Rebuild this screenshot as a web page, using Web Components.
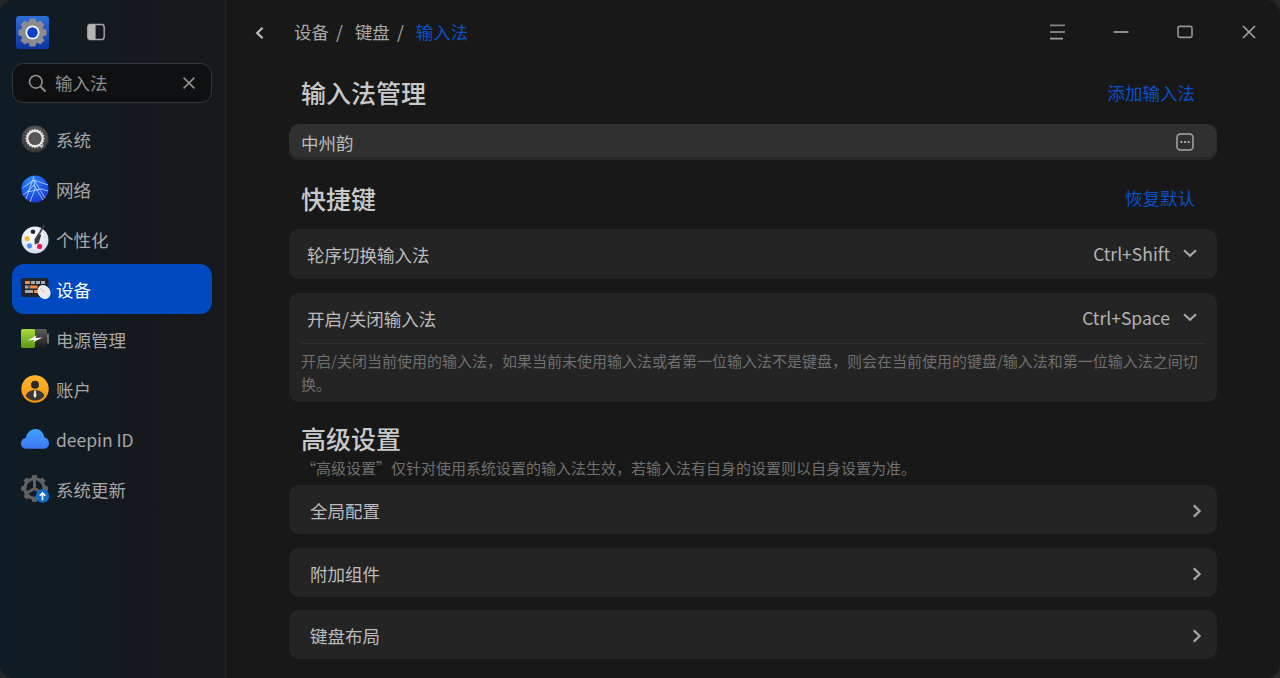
<!DOCTYPE html>
<html lang="zh-CN"><head><meta charset="utf-8"><title>设置</title>
<style>
html,body{margin:0;padding:0;height:678px;overflow:hidden;background:#262626}
body{font-family:"Noto Sans CJK SC","Noto Sans",sans-serif}
</style></head><body>
<settings-window>
  <side-bar slot="side">
    <nav-item icon="system">系统</nav-item>
    <nav-item icon="network">网络</nav-item>
    <nav-item icon="theme">个性化</nav-item>
    <nav-item icon="device" active>设备</nav-item>
    <nav-item icon="power">电源管理</nav-item>
    <nav-item icon="account">账户</nav-item>
    <nav-item icon="cloud">deepin ID</nav-item>
    <nav-item icon="update">系统更新</nav-item>
  </side-bar>
  <title-bar slot="top"></title-bar>
  <section-head action="添加输入法" top="0">输入法管理</section-head>
  <setting-row kind="plain" hi>中州韵<ui-glyph slot="end" name="more"></ui-glyph></setting-row>
  <section-head action="恢复默认" top="10">快捷键</section-head>
  <setting-row kind="key" value="Ctrl+Shift">轮序切换输入法</setting-row>
  <setting-row kind="key" value="Ctrl+Space" style="margin-top:14px">开启/关闭输入法
    <span slot="desc">开启/关闭当前使用的输入法，如果当前未使用输入法或者第一位输入法不是键盘，则会在当前使用的键盘/输入法和第一位输入法之间切换。</span>
  </setting-row>
  <section-head top="13" sub="“高级设置”仅针对使用系统设置的输入法生效，若输入法有自身的设置则以自身设置为准。">高级设置</section-head>
  <setting-row kind="link">全局配置</setting-row>
  <setting-row kind="link" style="margin-top:14px">附加组件</setting-row>
  <setting-row kind="link" style="margin-top:13px">键盘布局</setting-row>
</settings-window>
<script>
const GLYPHS={
 more:'<svg width="20" height="20" viewBox="0 0 20 20"><rect x="2" y="2" width="16" height="16" rx="3.5" fill="none" stroke="#a8a8a8" stroke-width="1.500"/><circle cx="6.400" cy="10" r="1.100" fill="#c4c4c4"/><circle cx="10" cy="10" r="1.100" fill="#c4c4c4"/><circle cx="13.600" cy="10" r="1.100" fill="#c4c4c4"/></svg>',
 down:'<svg width="16" height="16" viewBox="0 0 16 16"><path d="M2 4.200 8 9.800 14 4.200" fill="none" stroke="#a6a6a6" stroke-width="2.200"/></svg>',
 right:'<svg width="16" height="16" viewBox="0 0 16 16"><path d="M4.800 2.400 10.600 8 4.800 13.600" fill="none" stroke="#a6a6a6" stroke-width="2.200"/></svg>',
 back:'<svg width="16" height="16" viewBox="0 0 16 16"><path d="M10.600 2.800 5.200 8 10.600 13.200" fill="none" stroke="#bdbdbd" stroke-width="2.200"/></svg>',
 menu:'<svg width="18" height="18" viewBox="0 0 18 18"><path d="M2 2.400h15" stroke="#858585" stroke-width="1.600" fill="none"/><path d="M2 9h15M2 15.600h13" stroke="#a0a0a0" stroke-width="1.600" fill="none"/></svg>',
 min:'<svg width="18" height="18" viewBox="0 0 18 18"><path d="M1.500 9h15" stroke="#8c8c8c" stroke-width="1.800" fill="none"/></svg>',
 max:'<svg width="18" height="18" viewBox="0 0 18 18"><rect x="2" y="3.400" width="14" height="11" rx="1.600" fill="none" stroke="#969696" stroke-width="1.600"/></svg>',
 close:'<svg width="18" height="18" viewBox="0 0 18 18"><path d="M3 3l12 12M15 3 3 15" stroke="#a0a0a0" stroke-width="1.700" fill="none"/></svg>',
 panel:'<svg width="20" height="20" viewBox="0 0 20 20"><rect x="1.800" y="2.600" width="16.400" height="14.800" rx="2.600" fill="none" stroke="#a3a3a3" stroke-width="1.500"/><path d="M4.400 2.600H9.600V17.400H4.400A2.600 2.600 0 0 1 1.800 14.800V5.200A2.600 2.600 0 0 1 4.400 2.600Z" fill="#b5b5b5"/></svg>',
 search:'<svg width="20" height="20" viewBox="0 0 20 20"><circle cx="8.800" cy="8.800" r="6.300" fill="none" stroke="#8e8e8e" stroke-width="1.700"/><path d="m13.500 13.500 5 5" stroke="#8e8e8e" stroke-width="1.900" fill="none"/></svg>',
 x:'<svg width="14" height="14" viewBox="0 0 14 14"><path d="M1.600 1.600l10.800 10.800M12.400 1.600 1.600 12.400" stroke="#8f8f8f" stroke-width="1.700" fill="none"/></svg>',
 logo:'<svg width="33" height="33" viewBox="0 0 33 33"><defs><linearGradient id="lg" x1="0" y1="0" x2="0" y2="1"><stop offset="0" stop-color="#2f6fd8"/><stop offset="1" stop-color="#0a34a0"/></linearGradient></defs><rect width="33" height="33" rx="3" fill="url(#lg)"/><g fill="#8c8c90"><circle cx="16.500" cy="16.500" r="11.500"/><rect x="13.200" y="2.500" width="6.600" height="6" rx="1.200"/><rect x="13.200" y="24.500" width="6.600" height="6" rx="1.200"/><rect x="2.500" y="13.200" width="6" height="6.600" rx="1.200"/><rect x="24.500" y="13.200" width="6" height="6.600" rx="1.200"/><g transform="rotate(45 16.500 16.500)"><rect x="13.200" y="2.500" width="6.600" height="6" rx="1.200"/><rect x="13.200" y="24.500" width="6.600" height="6" rx="1.200"/><rect x="2.500" y="13.200" width="6" height="6.600" rx="1.200"/><rect x="24.500" y="13.200" width="6" height="6.600" rx="1.200"/></g></g><circle cx="16.500" cy="16.500" r="7" fill="#f2f4f8"/><circle cx="16.500" cy="16.500" r="5.200" fill="#0a3fc8"/></svg>'
};
const gearTeeth=(cx,cy,n,ro,ri)=>{let d='';for(let i=0;i<n*2;i++){const r=i%2?ri:ro,a=i*Math.PI/n;d+=(i?'L':'M')+(cx+r*Math.cos(a)).toFixed(2)+' '+(cy+r*Math.sin(a)).toFixed(2)}return d+'Z'};
const cog=(cx,cy,n,ro,w,h,fill)=>{let s='';for(let i=0;i<n;i++)s+=`<rect x="${cx-w/2}" y="${cy-ro}" width="${w}" height="${h}" rx="1" fill="${fill}" transform="rotate(${i*360/n} ${cx} ${cy})"/>`;return s};
const NAV={
 system:`<svg width="28" height="28" viewBox="0 0 28 28"><defs><radialGradient id="s" cx=".5" cy=".35" r=".8"><stop offset="0" stop-color="#6a6a6a"/><stop offset="1" stop-color="#2b2b2b"/></radialGradient></defs><circle cx="14" cy="14" r="13.500" fill="url(#s)"/><path d="${gearTeeth(14,13.500,20,9.900,8.300)}" fill="#e8e8e8"/><circle cx="14" cy="13.500" r="6.600" fill="#565656"/><path d="M18.500 21.500l3-2.500 1.200 1-1.700 3.200z" fill="#c4c4c4"/></svg>`,
 network:`<svg width="28" height="28" viewBox="0 0 28 28"><defs><radialGradient id="n" cx=".35" cy=".2" r=".95"><stop offset="0" stop-color="#2d86f2"/><stop offset=".55" stop-color="#1a55ea"/><stop offset="1" stop-color="#2230c4"/></radialGradient></defs><circle cx="14" cy="14" r="13.600" fill="url(#n)"/><g stroke="#d2e5ff" stroke-width=".75" fill="none" opacity=".95"><path d="M13 1 5 24M13 5 24 23M1.500 13 13 5 27 10M13 10 22 25M13 10 6 17 2 20M6 17 20 14 27 16M13 5 14 14 9 27"/></g></svg>`,
 theme:`<svg width="28" height="29" viewBox="0 0 28 29"><defs><radialGradient id="p" cx=".4" cy=".35" r=".8"><stop offset="0" stop-color="#fff"/><stop offset="1" stop-color="#cdd5ea"/></radialGradient></defs><circle cx="14" cy="15" r="13.500" fill="url(#p)"/><circle cx="12" cy="6.800" r="2.300" fill="#26262a"/><circle cx="6.200" cy="13.600" r="2.700" fill="#f6b93b"/><circle cx="8.500" cy="20.800" r="2.600" fill="#4f8ff0"/><circle cx="18.600" cy="21.400" r="2.600" fill="#e61d4d"/><path d="M23.400 0 18.300 8.500" stroke="#3c3c40" stroke-width="1.700"/><path d="M17.400 8 20.200 10 17.800 18 13.800 19.400 13.500 14.500Z" fill="#3a3a3e"/></svg>`,
 device:`<svg width="30" height="22" viewBox="0 0 30 22"><rect x="0" y="0" width="27.500" height="19" rx="2.500" fill="#20242e"/><g fill="#a8a8a8"><rect x="4" y="3" width="5" height="3" fill="#f08a45"/><rect x="10" y="3" width="4" height="3"/><rect x="15" y="3" width="4" height="3"/><rect x="20" y="3" width="4" height="3"/><rect x="4" y="7.500" width="3.500" height="3"/><rect x="8.500" y="7.500" width="8" height="3" fill="#f08a45"/><rect x="4" y="12" width="8" height="3"/><rect x="13" y="12" width="4" height="3" fill="#f08a45"/></g><ellipse cx="23" cy="14" rx="6.200" ry="7.400" transform="rotate(-35 23 14)" fill="#ececec"/><path d="M19.500 10.200l3.500 3.800" stroke="#b0b0b0" stroke-width=".9"/></svg>`,
 power:`<svg width="28" height="20" viewBox="0 0 28 20"><defs><linearGradient id="g" x1="0" x2="0" y1="0" y2="1"><stop offset="0" stop-color="#a9dc3c"/><stop offset="1" stop-color="#5b9814"/></linearGradient><linearGradient id="k" x1="0" x2="0" y1="0" y2="1"><stop offset="0" stop-color="#5e5e5e"/><stop offset="1" stop-color="#1a1a1a"/></linearGradient></defs><rect x="0" y="0" width="26" height="19" rx="1.800" fill="url(#k)"/><rect x="0" y="0" width="14" height="19" rx="1.800" fill="url(#g)"/><rect x="26" y="4.500" width="2" height="10" rx=".6" fill="#6e6e6e"/><path d="M6.500 11.500 15.500 6.500 14.500 9 21.500 8.500 12.500 13 13.500 10.800Z" fill="#fff"/></svg>`,
 account:`<svg width="28" height="28" viewBox="0 0 28 28"><defs><linearGradient id="a" x1="0" x2="0" y1="0" y2="1"><stop offset="0" stop-color="#ffb52e"/><stop offset="1" stop-color="#f59410"/></linearGradient><clipPath id="ac"><circle cx="14" cy="14" r="11.500"/></clipPath></defs><circle cx="14" cy="14" r="13.700" fill="url(#a)"/><circle cx="14" cy="9.800" r="4" fill="#2c2a28"/><g clip-path="url(#ac)"><path d="M3 28C3 18 9 15 14 15S25 18 25 28Z" fill="#3d3630"/></g><path d="M13.200 15.500h1.600l.7 5.500-1.500 2-1.500-2Z" fill="#e6e6e6"/></svg>`,
 cloud:`<svg width="28" height="20" viewBox="0 0 28 20"><defs><linearGradient id="c" x1="0" x2="0" y1="0" y2="1"><stop offset="0" stop-color="#3fa2ff"/><stop offset="1" stop-color="#3e76f4"/></linearGradient></defs><path d="M5.600 19.800C2.400 19.800 0 17.400 0 14.400C0 11.600 2 9.400 4.800 9C6 3.600 9.800 0 14.300 0C18.900 0 22.400 3.200 23.200 8C26 8.800 28 11.200 28 14.200C28 17.400 25.500 19.800 22.200 19.800Z" fill="url(#c)"/></svg>`,
 update:`<svg width="28" height="28" viewBox="0 0 28 28">${cog(13.500,13.500,8,13.400,5.200,5,'#616161')}<circle cx="13.500" cy="13.500" r="9.700" fill="none" stroke="#616161" stroke-width="3"/><path d="M13.500 13.500V5M13.500 13.500 5.700 18M13.500 13.500 21.300 18" stroke="#616161" stroke-width="3"/><circle cx="21.500" cy="21" r="6.700" fill="#0e6ccc"/><path d="M21.500 25.200V18.200M18.700 20.700l2.800-2.800 2.800 2.800" stroke="#fff" stroke-width="1.600" fill="none"/></svg>`
};
class Base extends HTMLElement{
  mount(html){const r=this.attachShadow({mode:'open'});r.innerHTML=html;return r}
}
class UiGlyph extends Base{connectedCallback(){if(this.shadowRoot)return;
  this.mount(`<style>:host{display:inline-flex;align-items:center;justify-content:center;line-height:0}</style>${GLYPHS[this.getAttribute('name')]}`)}}
class SettingsWindow extends Base{connectedCallback(){if(this.shadowRoot)return;
  this.mount(`<style>
  :host{display:flex;width:1280px;height:678px;overflow:hidden;border-radius:14px;background:#181818;color:#c8c8c8}
  .side{flex:0 0 226px;display:block}
  .main{flex:1;min-width:0;display:flex;flex-direction:column;padding:0 63px 0 63px;box-sizing:border-box}
  .top{display:block;margin:0 -63px}
  </style><div class="side"><slot name="side"></slot></div><div class="main"><div class="top"><slot name="top"></slot></div><slot></slot></div>`)}}
class SideBar extends Base{connectedCallback(){if(this.shadowRoot)return;
  this.mount(`<style>
  :host{display:flex;flex-direction:column;box-sizing:border-box;height:678px;padding:0 13px 0 12px;border-right:1px solid #222426;background:linear-gradient(90deg,#0f1c26 0%,#14191e 55%,#17191b 100%)}
  .head{height:63px;display:flex;align-items:flex-start;padding:16px 0 0 4px;box-sizing:border-box;gap:37px}
  .panel{margin-top:6px}
  .search{height:40px;box-sizing:border-box;margin-bottom:11px;border:1px solid #34373a;border-radius:11px;background:#0e1012;display:flex;align-items:center;padding:0 15px 0 14px;color:#8c8c8c;font-size:17.500px}
  .search span{flex:1;margin-left:8px;line-height:1}
  .list{display:flex;flex-direction:column}
  </style>
  <div class="head"><ui-glyph name="logo"></ui-glyph><ui-glyph class="panel" name="panel"></ui-glyph></div>
  <div class="search"><ui-glyph name="search"></ui-glyph><span>输入法</span><ui-glyph name="x"></ui-glyph></div>
  <div class="list"><slot></slot></div>`)}}
class NavItem extends Base{connectedCallback(){if(this.shadowRoot)return;
  const a=this.hasAttribute('active');
  this.mount(`<style>
  :host{display:flex;align-items:center;height:50px;box-sizing:border-box;padding-left:9px;border-radius:12px;font-size:17.500px;color:${a?'#fff':'#a7a7a7'};background:${a?'#0049c1':'transparent'}}
  .i{width:28px;height:30px;display:flex;align-items:center;justify-content:flex-start;margin-right:7px;line-height:0;flex:none}
  svg{overflow:visible}
  </style><span class="i">${NAV[this.getAttribute('icon')]}</span><slot></slot>`)}}
class TitleBar extends Base{connectedCallback(){if(this.shadowRoot)return;
  this.mount(`<style>
  :host{display:flex;align-items:center;height:64px;box-sizing:border-box;padding:0 22px 0 26px;font-size:17.500px;color:#a9a9a9}
  .back{margin-right:26px;margin-top:1px}
  .crumb{flex:1;display:flex;align-items:center;margin-bottom:2px}
  .crumb i{font-style:normal;margin:0 12px 0 7px}
  .crumb b{font-weight:400;color:#0a50c8}
  .win{display:flex;align-items:center;gap:46px}
  </style><ui-glyph class="back" name="back"></ui-glyph>
  <div class="crumb"><span>设备</span><i>/</i><span>键盘</span><i>/</i><b>输入法</b></div>
  <div class="win"><ui-glyph name="menu"></ui-glyph><ui-glyph name="min"></ui-glyph><ui-glyph name="max"></ui-glyph><ui-glyph name="close"></ui-glyph></div>`)}}
class SectionHead extends Base{connectedCallback(){if(this.shadowRoot)return;
  const act=this.getAttribute('action'),sub=this.getAttribute('sub'),top=+(this.getAttribute('top')||0);
  this.mount(`<style>
  :host{display:block;margin-top:${top}px;padding:0 22px 0 12px}
  .r{display:flex;align-items:center;justify-content:space-between;height:${sub?50:(top>0?59:60)}px}
  h2{margin:0 0 ${top===10?2:4}px;font-size:25px;font-weight:500;color:#c9c9c9;line-height:1}
  .a{color:#0a50c8;font-size:17.500px;margin-bottom:4px}
  .s{font-size:15px;color:#6f6f6f;line-height:20px;margin:-7px 0 7px;height:20px;white-space:nowrap}
  </style><div class="r"><h2><slot></slot></h2>${act?`<span class="a">${act}</span>`:''}</div>${sub?`<div class="s">${sub}</div>`:''}`)}}
class SettingRow extends Base{connectedCallback(){if(this.shadowRoot)return;
  const k=this.getAttribute('kind'),v=this.getAttribute('value'),hi=this.hasAttribute('hi');
  const h=k==='plain'?36:k==='key'?50:49,pl=k==='plain'?12:k==='key'?18:21;
  const end=k==='key'?`<span class="v">${v}</span><ui-glyph class="g" name="down"></ui-glyph>`:k==='link'?'<ui-glyph class="g" name="right"></ui-glyph>':'<slot name="end"></slot>';
  this.mount(`<style>
  :host{display:block;border-radius:10px;background:${hi?'#303030':'#242424'};${hi?'box-shadow:inset 0 -3px 0 #282828;':''}font-size:17.500px;color:#bcbcbc}
  .r{display:flex;align-items:center;height:${h}px;box-sizing:border-box;padding:${k==='link'?'2px':'0'} ${k==='plain'?22:k==='link'?12:19}px 0 ${pl}px}
  .t{flex:1}
  .v{color:#b4b4b4;margin:0 12px 2px 0}
  .g{width:16px}
  .d{display:none;margin:0 12px;border-top:1px solid #303030;padding:5px 0 7px;font-size:15px;line-height:23px;color:#6f6f6f}
  .d.on{display:block}
  </style><div class="r"><span class="t"><slot></slot></span>${end}</div><div class="d"><slot name="desc"></slot></div>`);
  if(this.querySelector('[slot=desc]'))this.shadowRoot.querySelector('.d').classList.add('on');}}
customElements.define('ui-glyph',UiGlyph);
customElements.define('settings-window',SettingsWindow);
customElements.define('side-bar',SideBar);
customElements.define('nav-item',NavItem);
customElements.define('title-bar',TitleBar);
customElements.define('section-head',SectionHead);
customElements.define('setting-row',SettingRow);
</script>
</body></html>
